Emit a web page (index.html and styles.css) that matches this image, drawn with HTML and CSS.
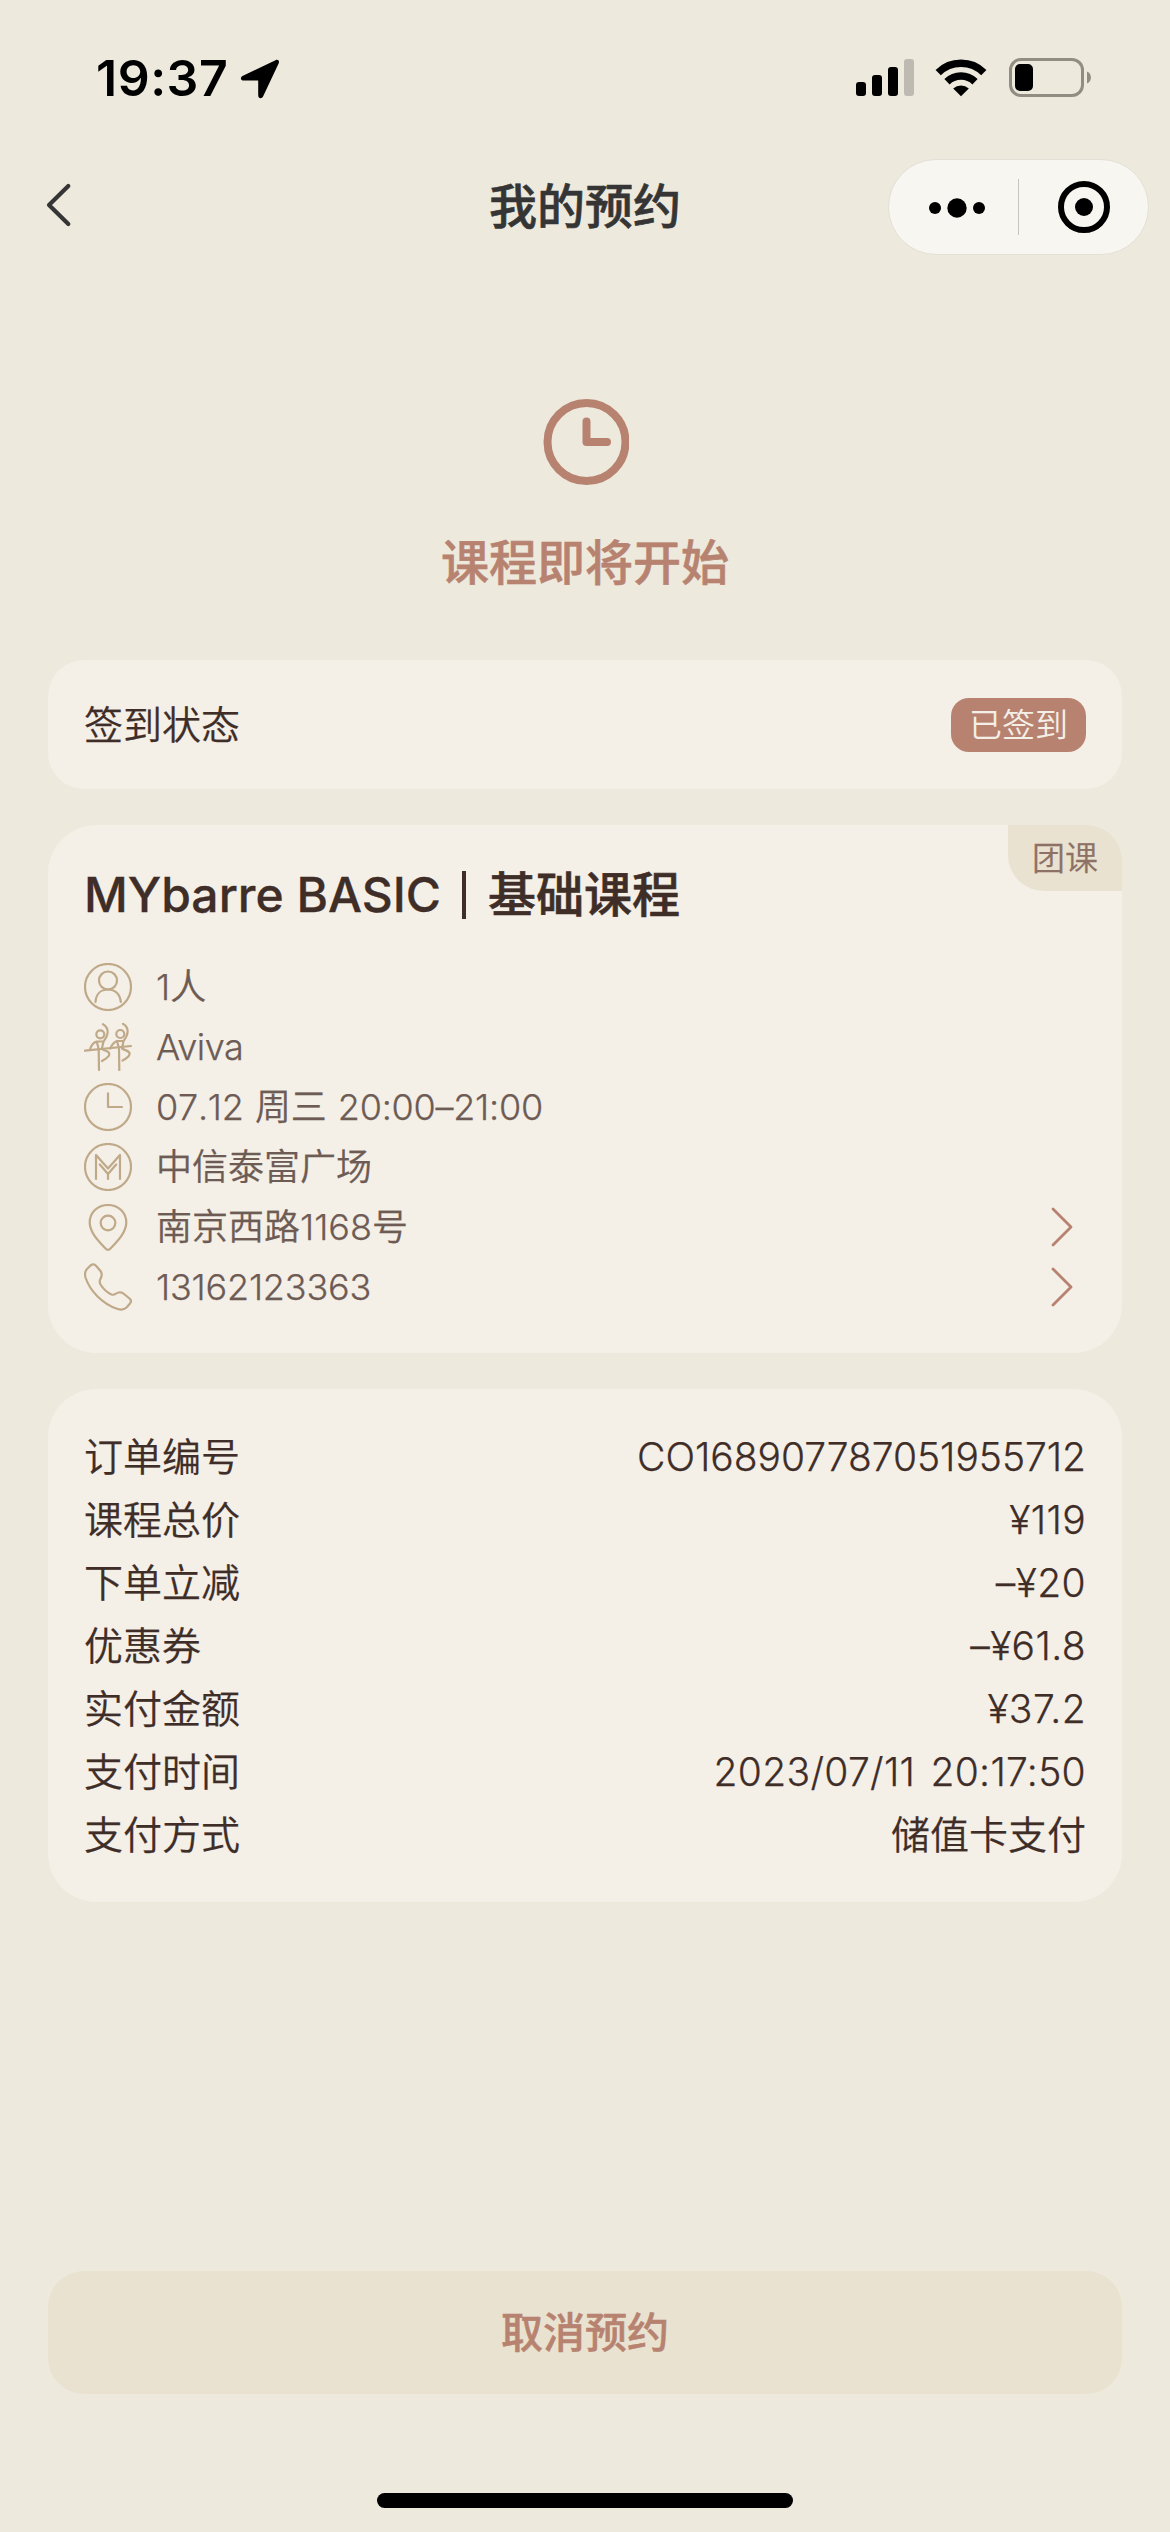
FILE: index.html
```html
<!DOCTYPE html>
<html lang="zh-CN">
<head>
<meta charset="utf-8">
<title>我的预约</title>
<link rel="stylesheet" href="styles.css">
</head>
<body>
<div class="screen">
  <header class="status-bar">
    <div class="status-left">
      <span class="time">19:37</span>
      <svg class="location" width="40" height="40" viewBox="0 0 40 40"><path d="M35.5 1.2 3 16.8C-.2 18.500.2 21.600 4 21.600H18.200V36C18.200 39.800 21.800 40.300 23.300 37L38.600 4.600C39.800 2 38 0 35.500 1.200Z"/></svg>
    </div>
    <div class="status-right">
      <svg width="58" height="38" viewBox="0 0 58 38"><rect x="0" y="23" width="10" height="14" rx="3"/><rect x="16" y="16" width="10" height="21" rx="3"/><rect x="32" y="8" width="10" height="29" rx="3"/><rect x="48" y="0" width="10" height="37" rx="3" fill="#bebab1"/></svg>
      <svg class="wifi" width="52" height="38" viewBox="0 0 52 38"><g fill="none" stroke="#000" stroke-width="7.500"><path d="M3.200 13.700A32.500 32.500 0 0 1 48.800 13.700"/><path d="M12 22.800A20 20 0 0 1 40 22.800"/></g><path d="M26 37.300 18.200 29.500A11.500 11.500 0 0 1 33.800 29.500Z"/></svg>
      <svg class="battery" width="83" height="40" viewBox="0 0 83 40"><rect x="1.500" y="1.500" width="72" height="36" rx="10.500" fill="none" stroke="#918d82" stroke-width="3"/><rect x="6" y="6" width="18" height="27" rx="5"/><path d="M78 13.500C83.300 15.500 83.300 23.500 78 25.500Z" fill="#918d82"/></svg>
    </div>
  </header>

  <nav class="nav-bar">
    <svg class="back" width="26" height="44" viewBox="0 0 26 44"><path d="M22.300 3 3 22 22.300 41" fill="none" stroke="#353535" stroke-width="4.200" stroke-linecap="round" stroke-linejoin="round"/></svg>
    <h1 class="nav-title">我的预约</h1>
    <div class="capsule">
      <svg class="dots" width="56" height="20" viewBox="0 0 56 20"><circle cx="6" cy="10" r="6"/><circle cx="28" cy="10" r="9.700"/><circle cx="50" cy="10" r="6"/></svg>
      <span class="capsule-line"></span>
      <svg class="target" width="52" height="52" viewBox="0 0 52 52"><circle cx="26" cy="26" r="23" fill="none" stroke="#000" stroke-width="6"/><circle cx="26" cy="26" r="9"/></svg>
    </div>
  </nav>

  <section class="hero">
    <svg width="88" height="88" viewBox="0 0 88 88" fill="none" stroke="#b78370" stroke-width="8" stroke-linecap="round" stroke-linejoin="round"><circle cx="45.500" cy="44" r="39"/><path d="M45.500 23.500V44H66"/></svg>
    <p class="hero-text">课程即将开始</p>
  </section>

  <main class="cards">
    <section class="card checkin">
      <span class="checkin-label">签到状态</span>
      <span class="badge">已签到</span>
    </section>

    <section class="card course">
      <span class="tag">团课</span>
      <h2 class="course-title"><span class="latin">MYbarre BASIC</span><span class="bar"></span>基础课程</h2>
      <ul class="info">
        <li>
          <svg class="icon" viewBox="0 0 48 48"><circle cx="24" cy="24" r="23"/><circle cx="24" cy="17.500" r="9"/><path d="M11.500 39C12 31 17 26.500 24 26.500S36.200 31 36.800 39"/></svg>
          <span>1人</span>
        </li>
        <li>
          <svg class="icon" viewBox="0 0 48 48"><path d="M1 27.700 47 23"/><circle cx="16.300" cy="11.300" r="4"/><path d="M19 1.200C24 4 26 10 19.500 18.500L17.800 26C21 28.500 25.500 27.500 25.300 31.500 24.500 34.500 21.500 36 18 38M19.500 18.500H12.700L14.700 26 15 47M12.700 18.500C9 19.500 7 23 6 26.500"/><circle cx="36.300" cy="11" r="4"/><path d="M39 .8C44 3.600 46 9.600 39.500 18L38 25.500C41.500 28 45.800 27.300 45.600 31 45 34 42 35.800 38.500 37.500M39.500 18H33L35 25.500 35.300 47M33 18C29.500 19.500 27.500 22.500 26.300 25.500"/></svg>
          <span class="name">Aviva</span>
        </li>
        <li>
          <svg class="icon" viewBox="0 0 48 48"><circle cx="24" cy="24" r="23"/><path d="M24 10.300V24H38"/></svg>
          <span class="datetime">07.12 周三 20:00–21:00</span>
        </li>
        <li>
          <svg class="icon" viewBox="0 0 48 48"><circle cx="24" cy="24" r="23"/><path d="M12 36V12L24 25.500 36 12V36M15.800 21.500 24 31 32.200 21.500M24 31V36"/></svg>
          <span>中信泰富广场</span>
        </li>
        <li>
          <svg class="icon" viewBox="0 0 48 48"><path d="M24 2C13.500 2 5.700 9.500 5.700 19.500 5.700 29.500 15 38.500 21.500 45.500 23 47.300 25 47.300 26.500 45.500 33 38.500 42.300 29.500 42.300 19.500 42.300 9.500 34.500 2 24 2Z"/><circle cx="24" cy="20" r="7.300"/></svg>
          <span>南京西路1168号</span>
          <svg class="chevron" width="24" height="42" viewBox="0 0 24 42"><path d="M3 3 21 21 3 39"/></svg>
        </li>
        <li>
          <svg class="icon" viewBox="0 0 48 48"><path d="M6.500 2.500C8.500 1 10.500 1 12 2.800L16.500 8C18 10 18 12 17.300 14 16 17 14.500 18.500 16.500 21.500 19 25.500 23 29.500 27.500 31.500 30.500 32.700 32 30 34.500 29.500 36.500 29 38.500 29.500 40 31L45.500 35.500C47.200 37 47.300 38.800 46 40.500L42.500 44.500C40 47 36.500 47 33 45.800 18 40.500 6 28 1.500 14.500.5 11 .8 8.500 3 6Z"/></svg>
          <span class="phone">13162123363</span>
          <svg class="chevron" width="24" height="42" viewBox="0 0 24 42"><path d="M3 3 21 21 3 39"/></svg>
        </li>
      </ul>
    </section>

    <dl class="card order">
      <div><dt>订单编号</dt><dd class="number">CO168907787051955712</dd></div>
      <div><dt>课程总价</dt><dd>¥119</dd></div>
      <div><dt>下单立减</dt><dd>–¥20</dd></div>
      <div><dt>优惠券</dt><dd>–¥61.8</dd></div>
      <div><dt>实付金额</dt><dd>¥37.2</dd></div>
      <div><dt>支付时间</dt><dd class="paid-at">2023/07/11 20:17:50</dd></div>
      <div><dt>支付方式</dt><dd class="method">储值卡支付</dd></div>
    </dl>
  </main>

  <footer class="footer">
    <button class="cancel" type="button">取消预约</button>
    <span class="home-indicator"></span>
  </footer>
</div>
</body>
</html>
```
FILE: styles.css
```css
* { box-sizing: border-box; margin: 0; padding: 0; }
body { background: #ede9dd; }
svg { display: block; flex: none; }
.screen {
  width: 1170px;
  height: 2532px;
  display: flex;
  flex-direction: column;
  font-family: Inter, "Noto Sans CJK SC", sans-serif;
  font-weight: 350;
  color: #3f2d27;
}
.status-bar {
  height: 159px;
  display: flex;
  justify-content: space-between;
  padding: 58px 78px 0 96px;
}
.status-left, .status-right { display: flex; align-items: flex-start; }
.time { font-size: 50px; line-height: 40px; font-weight: 600; color: #000; width: 144px; letter-spacing: .5px; }
.location { margin-top: 1px; }
.status-right svg { margin-top: 1px; }
.status-right .wifi { margin-left: 21px; }
.status-right .battery { margin: 0 0 0 22px; }
.nav-bar {
  height: 96px;
  display: grid;
  grid-template-columns: 1fr auto 1fr;
  align-items: center;
  padding: 0 21px 0 46px;
}
.nav-title { font-size: 48px; line-height: 96px; font-weight: 500; color: #353535; margin-left: -25px; -webkit-text-stroke: .6px; }
.back { margin-top: -4px; }
.capsule {
  justify-self: end;
  width: 261px;
  height: 96px;
  border: 1px solid #e2dfd6;
  border-radius: 48px;
  background: #f7f6f1;
  display: flex;
  align-items: center;
  padding-left: 40px;
}
.dots { margin-top: 2px; }
.capsule-line { width: 1px; height: 56px; background: #c5c4c0; margin: 0 39px 0 33px; }
.hero {
  height: 405px;
  padding-top: 143px;
  display: flex;
  flex-direction: column;
  align-items: center;
}
.hero-text { margin-top: 41px; font-size: 48px; line-height: 72px; font-weight: 500; color: #b78370; -webkit-text-stroke: .6px; }
.cards { display: flex; flex-direction: column; gap: 36px; padding: 0 48px; -webkit-text-stroke: .25px; }
.card { background: #f4efe7; border-radius: 48px; padding: 36px; }
.checkin {
  height: 129px;
  border-radius: 36px;
  display: flex;
  align-items: center;
  justify-content: space-between;
  font-size: 39px;
}
.checkin-label { line-height: 54px; }
.badge {
  width: 135px;
  height: 54px;
  border-radius: 18px;
  background: #b78370;
  color: #f4efe7;
  font-size: 33px;
  line-height: 54px;
  text-align: center;
  -webkit-text-stroke: 0;
}
.course { position: relative; height: 528px; }
.tag {
  position: absolute;
  top: 0;
  right: 0;
  width: 114px;
  height: 66px;
  border-radius: 0 36px;
  background: #e9e2d0;
  color: #8d7166;
  font-size: 33px;
  line-height: 66px;
  text-align: center;
}
.course-title { display: flex; align-items: center; height: 68px; font-size: 48px; line-height: 68px; font-weight: 500; -webkit-text-stroke: .6px; }
.latin { width: 356px; white-space: nowrap; -webkit-text-stroke: .3px; }
.bar { width: 4px; height: 48px; margin: 0 22px; background: #3f2d27; }
.info { list-style: none; margin-top: 28px; }
.info li { height: 60px; display: flex; align-items: center; font-size: 36px; line-height: 60px; color: #6d5b54; }
.name { letter-spacing: -.5px; }
.datetime { font-kerning: none; letter-spacing: -.25px; word-spacing: 1.5px; }
.phone { letter-spacing: -.2px; }
.icon { width: 48px; height: 48px; margin-right: 24px; fill: none; stroke: #bfa988; stroke-width: 2.2; stroke-linecap: round; stroke-linejoin: round; }
.chevron { margin: 0 12px 0 auto; fill: none; stroke: #b78370; stroke-width: 2.8; stroke-linecap: round; stroke-linejoin: round; }
.order { height: 513px; font-size: 39px; line-height: 63px; }
.order div { display: flex; justify-content: space-between; }
.order dd { letter-spacing: .4px; }
.order .number { letter-spacing: -.04px; }
.order .paid-at { letter-spacing: .3px; word-spacing: 4px; }
.order .method { letter-spacing: 0; }
.footer {
  margin-top: auto;
  height: 261px;
  padding: 0 48px;
  display: flex;
  flex-direction: column;
  align-items: center;
}
.cancel {
  width: 100%;
  height: 123px;
  border: 0;
  border-radius: 36px;
  background: #e9e2d0;
  color: #b78370;
  font: 500 42px/123px Inter, "Noto Sans CJK SC", sans-serif;
  -webkit-text-stroke: .5px;
}
.home-indicator { width: 416px; height: 15px; border-radius: 8px; background: #000; margin-top: 99px; }
```
